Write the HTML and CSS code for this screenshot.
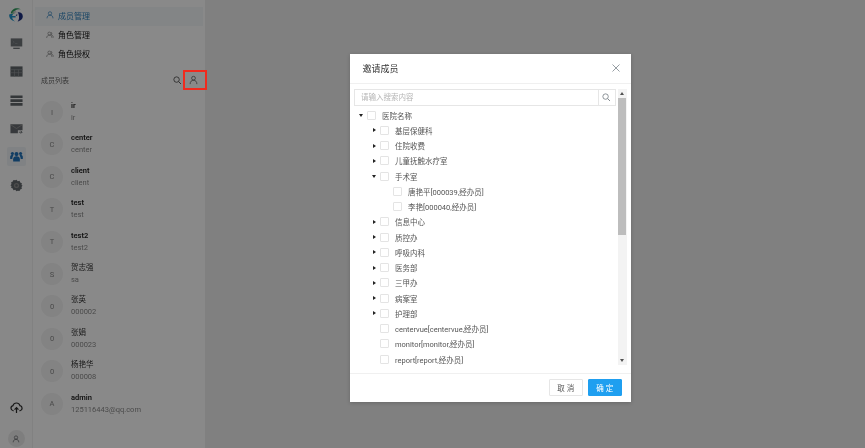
FILE: index.html
```html
<!DOCTYPE html>
<html lang="zh">
<head>
<meta charset="utf-8">
<title>成员管理</title>
<link rel="stylesheet" href="styles.css">
</head>
<body>
<div class="page">
  <div class="app">
    <nav class="rail">
      <div class="rail-top">
        <svg class="logo" viewBox="0 0 20 20"><path d="M3.500 8C4 3.500 8 1 12.500 1.500c1.500.2 2.700.8 3.500 1.700-2.500-.6-5-.3-6.500 1C8.300 5.300 8 6.500 8 8z" fill="#2f9a5c"/><path d="M12 6.500c3.500-.5 6.500 1.500 6.500 5 0 3.500-3 6-6.500 6.500 1.200-1.500 1.800-3 1.800-5 0-2.700-.5-4.800-1.800-6.500z" fill="#1c2f7e"/><path d="M11.500 8.500v2.500h-2z" fill="#1c2f7e"/><path d="M1.500 9.500c-.5 4 2.500 8 7.500 8.500-2-1-3.500-2.700-3.800-4.800h4.300v-2H5.200c.1-1 .5-1.800 1.300-2.500-2 0-3.800 0-5 .8z" fill="#1f93c9"/><path d="M5 6.500l4-2 2 2-3 1z" fill="#c9c9c9"/></svg>
        <svg class="ri" viewBox="0 0 14 14"><path d="M.8 1.500h12.400v8.700H.8z" fill="#6e7377"/><path d="M3 4l1.500 1.500L3 7M5.500 7H8" stroke="#8f9498" stroke-width=".7" fill="none"/><path d="M3.500 11.500h7v1.300h-7z" fill="#5f6468"/></svg>
        <svg class="ri" viewBox="0 0 14 14"><path d="M.5 1.500h13v11H.5z" fill="#5f6468"/><path d="M.5 5h13M.5 8.300h13M4.800 5v7.500M9.200 5v7.500" stroke="#8f9498" stroke-width=".7"/></svg>
        <svg class="ri" viewBox="0 0 14 14"><path d="M.5 1.500h13v2.900H.5zM.5 5.600h13v2.900H.5zM.5 9.700h13v2.900H.5z" fill="#5f6468"/></svg>
        <svg class="ri" viewBox="0 0 14 14"><path d="M.5 2.500h13v6.500H8.500v3H.5z" fill="#65696d"/><path d="M.8 3l6.200 4 6.200-4" stroke="#9a9a9a" stroke-width=".8" fill="none"/><path d="M9.500 11H13M11.500 9.500l1.500 1.500-1.500 1.500" stroke="#5f6468" stroke-width=".9" fill="none"/></svg>
        <div class="ri-active">
          <svg class="ri" viewBox="0 0 14 14"><g fill="#1f6fb5"><circle cx="7" cy="4.400" r="2.200"/><circle cx="2.600" cy="3.800" r="1.700"/><circle cx="11.400" cy="3.800" r="1.700"/><path d="M3.400 12.500V10c0-2.300 1.300-3.300 3.600-3.300s3.600 1 3.600 3.300v2.500z"/><path d="M.2 9.800V7.500c0-1.400.9-2 2.400-2 .5 0 .9.100 1.200.2C3 6.800 2.500 8.100 2.500 9.800zM13.800 9.800V7.500c0-1.400-.9-2-2.400-2-.5 0-.9.100-1.200.2.800 1.100 1.300 2.400 1.300 4.100z"/></g></svg>
        </div>
        <svg class="ri" viewBox="0 0 14 14"><path d="M7 .8l1.300 1.600 2-.4.700 1.800 1.800.8-.4 1.900L13.500 7l-1.100 1.500.4 1.900-1.800.8-.7 1.800-2-.4L7 13.200l-1.300-1.600-2 .4-.7-1.800-1.800-.8.4-1.900L.5 7l1.100-1.500-.4-1.900L3 2.800l.7-1.800 2 .4z" fill="#62676b"/><circle cx="7" cy="7" r="2.800" fill="#8c8c8c"/><circle cx="7" cy="7" r="1.300" fill="#62676b"/></svg>
      </div>
      <div class="rail-bottom">
        <svg class="cloud" viewBox="0 0 14 14"><path d="M4 10.500H3.500a2.800 2.800 0 0 1-.3-5.500 3.900 3.900 0 0 1 7.500 0 2.800 2.800 0 0 1 .1 5.500H10" fill="none" stroke="#2b2b2b" stroke-width="1.300"/><path d="M7 13V7.300M4.900 9.300 7 7.200l2.100 2.100" fill="none" stroke="#2b2b2b" stroke-width="1.300"/></svg>
        <div class="me">
          <svg class="me-icon" viewBox="0 0 12 12"><circle cx="6" cy="3.800" r="2.500" fill="none" stroke="#54585c"/><path d="M1.800 11c0-3 1.800-4.500 4.200-4.500S10.200 8 10.200 11" fill="none" stroke="#54585c"/></svg>
        </div>
      </div>
    </nav>

    <aside class="panel">
      <ul class="menu">
        <li class="menu-item is-active">
          <svg class="mi" viewBox="0 0 12 12"><circle cx="6" cy="3.600" r="2.500" fill="none" stroke="#2f7fb8"/><path d="M1.500 11c0-3.200 2-4.700 4.500-4.700s4.500 1.500 4.500 4.700" fill="none" stroke="#2f7fb8"/></svg>
          <span>成员管理</span>
        </li>
        <li class="menu-item">
          <svg class="mi" viewBox="0 0 12 12"><circle cx="5" cy="3.800" r="2.200" fill="none" stroke="#5e5e5e" stroke-width=".8"/><path d="M1 10.500c0-2.800 1.700-4.100 4-4.100s4 1.300 4 4.100M7.500 1.800a2.200 2.200 0 0 1 0 4c2 .4 3.500 1.600 3.500 4.200" fill="none" stroke="#5e5e5e" stroke-width=".8"/></svg>
          <span>角色管理</span>
        </li>
        <li class="menu-item">
          <svg class="mi" viewBox="0 0 12 12"><circle cx="5" cy="3.800" r="2.200" fill="none" stroke="#5e5e5e" stroke-width=".8"/><path d="M1 10.500c0-2.800 1.700-4.100 4-4.100s4 1.300 4 4.100M7.500 1.800a2.200 2.200 0 0 1 0 4c2 .4 3.500 1.600 3.500 4.200" fill="none" stroke="#5e5e5e" stroke-width=".8"/></svg>
          <span>角色授权</span>
        </li>
      </ul>
      <div class="list-head">
        <span class="list-title">成员列表</span>
        <svg class="list-search" viewBox="0 0 10 10"><circle cx="4.200" cy="4.200" r="3.200" fill="none" stroke="#4a4a4a" stroke-width="1"/><path d="M6.600 6.600 9.400 9.400" stroke="#4a4a4a" stroke-width="1.100"/></svg>
        <span class="invite">
          <svg class="invite-icon" viewBox="0 0 12 12"><circle cx="6" cy="3.600" r="2.500" fill="none" stroke="#555"/><path d="M1.500 11.500c0-3.500 2-5.200 4.500-5.200s4.500 1.700 4.500 5.200" fill="none" stroke="#555"/></svg>
        </span>
      </div>
      <ul class="members">
        <li class="member"><span class="avatar">I</span><div class="who"><b class="name">ir</b><span class="sub">ir</span></div></li>
        <li class="member"><span class="avatar">C</span><div class="who"><b class="name">center</b><span class="sub">center</span></div></li>
        <li class="member"><span class="avatar">C</span><div class="who"><b class="name">client</b><span class="sub">client</span></div></li>
        <li class="member"><span class="avatar">T</span><div class="who"><b class="name">test</b><span class="sub">test</span></div></li>
        <li class="member"><span class="avatar">T</span><div class="who"><b class="name">test2</b><span class="sub">test2</span></div></li>
        <li class="member"><span class="avatar">S</span><div class="who"><span class="name">贺志强</span><span class="sub">sa</span></div></li>
        <li class="member"><span class="avatar">0</span><div class="who"><span class="name">张英</span><span class="sub">000002</span></div></li>
        <li class="member"><span class="avatar">0</span><div class="who"><span class="name">张娟</span><span class="sub">000023</span></div></li>
        <li class="member"><span class="avatar">0</span><div class="who"><span class="name">杨艳华</span><span class="sub">000008</span></div></li>
        <li class="member"><span class="avatar">A</span><div class="who"><b class="name">admin</b><span class="sub">125116443@qq.com</span></div></li>
      </ul>
    </aside>
    <main class="main"></main>
  </div>

  <div class="mask"></div>
  <span class="highlight"></span>

  <section class="modal">
    <header class="modal-head">
      <h2 class="modal-title">邀请成员</h2>
      <svg class="close" viewBox="0 0 8 8"><path d="M.5.5l7 7M7.500.5l-7 7" stroke="#8a9299" stroke-width=".9"/></svg>
    </header>
    <div class="modal-body">
      <div class="content">
        <div class="search">
          <span class="placeholder">请输入搜索内容</span>
          <span class="search-btn"><svg class="search-icon" viewBox="0 0 10 10"><circle cx="4.200" cy="4.200" r="3.200" fill="none" stroke="#7a8288" stroke-width="1"/><path d="M6.600 6.600 9.400 9.400" stroke="#7a8288" stroke-width="1.100"/></svg></span>
        </div>
        <ul class="tree">
          <li class="row l0"><i class="open"></i><span class="cb"></span><span>医院名称</span></li>
          <li class="row l1"><i class="closed"></i><span class="cb"></span><span>基层保健科</span></li>
          <li class="row l1"><i class="closed"></i><span class="cb"></span><span>住院收费</span></li>
          <li class="row l1"><i class="closed"></i><span class="cb"></span><span>儿童抚触水疗室</span></li>
          <li class="row l1"><i class="open"></i><span class="cb"></span><span>手术室</span></li>
          <li class="row l2"><i></i><span class="cb"></span><span>唐艳平[000039,经办员]</span></li>
          <li class="row l2"><i></i><span class="cb"></span><span>李艳[000040,经办员]</span></li>
          <li class="row l1"><i class="closed"></i><span class="cb"></span><span>信息中心</span></li>
          <li class="row l1"><i class="closed"></i><span class="cb"></span><span>质控办</span></li>
          <li class="row l1"><i class="closed"></i><span class="cb"></span><span>呼吸内科</span></li>
          <li class="row l1"><i class="closed"></i><span class="cb"></span><span>医务部</span></li>
          <li class="row l1"><i class="closed"></i><span class="cb"></span><span>三甲办</span></li>
          <li class="row l1"><i class="closed"></i><span class="cb"></span><span>病案室</span></li>
          <li class="row l1"><i class="closed"></i><span class="cb"></span><span>护理部</span></li>
          <li class="row l1"><i></i><span class="cb"></span><span>centervue[centervue,经办员]</span></li>
          <li class="row l1"><i></i><span class="cb"></span><span>monitor[monitor,经办员]</span></li>
          <li class="row l1"><i></i><span class="cb"></span><span>report[report,经办员]</span></li>
        </ul>
      </div>
      <div class="scrollbar">
        <span class="sb-up"></span>
        <span class="sb-thumb"></span>
        <span class="sb-down"></span>
      </div>
    </div>
    <footer class="modal-foot">
      <button class="btn" type="button">取 消</button>
      <button class="btn btn-primary" type="button">确 定</button>
    </footer>
  </section>
</div>
</body>
</html>
```

FILE: styles.css
```css
* { box-sizing: border-box; }
html, body { margin: 0; padding: 0; height: 100%; }
body { overflow: hidden; font-family: Roboto, "Noto Sans CJK SC", sans-serif; background: #e8e8e8; }
ul { list-style: none; margin: 0; padding: 0; }

.page { position: relative; width: 865px; height: 448px; overflow: hidden; filter: blur(.55px); }
.app { display: flex; height: 100%; }

.rail { width: 33px; flex: none; display: flex; flex-direction: column; justify-content: space-between; align-items: center; background: #f7f7f7; border-right: 1px solid #ececec; padding: 7px 0 1px; }
.rail-top { display: flex; flex-direction: column; align-items: center; }
.logo { width: 16px; height: 16px; margin-bottom: 13.800px; }
.ri { display: block; width: 13px; height: 13px; margin-bottom: 15.400px; }
.ri-active { width: 19px; height: 19px; margin: -3px 0 12.400px; background: #e9edf0; border-radius: 2px; display: flex; align-items: center; justify-content: center; }
.ri-active .ri { margin: 0; }
.rail-bottom { display: flex; flex-direction: column; align-items: center; gap: 16px; }
.cloud { width: 13px; height: 13px; }
.me { width: 17px; height: 17px; border-radius: 50%; background: #e6e6e6; display: flex; align-items: center; justify-content: center; }
.me-icon { width: 8px; height: 8px; }

.panel { width: 172px; flex: none; background: #fafafa; padding-top: 6.500px; }
.menu { padding: 0 2px; }
.menu-item { display: flex; align-items: center; height: 19.300px; padding: 0 0 1.500px 11px; gap: 4px; font-size: 8px; color: #111; }
.menu-item.is-active { background: #eef2f5; color: #2f7fb8; }
.mi { width: 8px; height: 8px; flex: none; }

.list-head { display: flex; align-items: center; margin-top: 6px; height: 20px; padding-left: 8px; }
.list-title { font-size: 7px; color: #666; flex: 1; }
.list-search { width: 8.500px; height: 8.500px; }
.invite { width: 24px; height: 20px; display: flex; align-items: center; justify-content: center; }
.invite-icon { width: 9px; height: 10px; }

.members { margin-top: 5.500px; }
.member { display: flex; align-items: center; height: 32.400px; padding-left: 8px; }
.avatar { width: 22px; height: 22px; flex: none; border-radius: 50%; background: #eeeeee; color: #888; font-size: 7.500px; display: flex; align-items: center; justify-content: center; margin-right: 8px; }
.who { display: flex; flex-direction: column; line-height: 12px; }
.name { font-size: 7.500px; font-weight: 600; color: #222; }
span.name { font-weight: 400; color: #333; }
.sub { font-size: 7.500px; color: #888; }

.main { flex: 1; background: #eaeaea; }

.mask { position: absolute; inset: 0; background: rgba(0, 0, 0, .45); }
.highlight { position: absolute; left: 183px; top: 69.500px; width: 24px; height: 20px; border: 2px solid #f02a1e; }

.modal { position: absolute; left: 349.500px; top: 54px; width: 281px; height: 348px; background: #fff; display: flex; flex-direction: column; box-shadow: 0 1px 4px rgba(0, 0, 0, .2); }
.modal-head { flex: none; height: 29.500px; display: flex; align-items: center; justify-content: space-between; padding: 0 11px 0 13px; border-bottom: 1px solid #f0f0f0; }
.modal-title { margin: 0; font-size: 9px; font-weight: 400; color: #333; }
.close { width: 8px; height: 8px; }
.modal-body { flex: 1; min-height: 0; display: flex; padding: 5.500px 4px 0 4.500px; gap: 2px; }
.content { flex: 1; min-width: 0; }
.search { display: flex; height: 17px; border: 1px solid #e6e6e6; }
.placeholder { flex: 1; padding-left: 6px; font-size: 7.500px; line-height: 15px; color: #b5b5b5; }
.search-btn { width: 17px; border-left: 1px solid #e6e6e6; display: flex; align-items: center; justify-content: center; }
.search-icon { width: 8.500px; height: 8.500px; }

.tree { margin-top: 1.500px; font-size: 7.500px; color: #555; }
.row { display: flex; align-items: center; height: 15.250px; white-space: nowrap; }
.row.l0 { padding-left: 3.500px; }
.row.l1 { padding-left: 16.500px; }
.row.l2 { padding-left: 29.500px; }
.row i { width: 6px; height: 6px; flex: none; margin-right: 3px; position: relative; }
.row i.closed::before { content: ""; position: absolute; left: 2px; top: 1px; border-left: 3px solid #222; border-top: 2px solid transparent; border-bottom: 2px solid transparent; }
.row i.open::before { content: ""; position: absolute; left: 1px; top: 2px; border-top: 3px solid #222; border-left: 2px solid transparent; border-right: 2px solid transparent; }
.cb { width: 9px; height: 9px; flex: none; border: 1px solid #e4e4e4; border-radius: 1px; background: #fff; margin-right: 6.500px; }

.scrollbar { width: 9px; flex: none; height: 276px; background: #f3f3f3; display: flex; flex-direction: column; position: relative; }
.sb-up { height: 9px; position: relative; flex: none; }
.sb-up::before { content: ""; position: absolute; left: 2.500px; top: 3px; border-bottom: 3px solid #505050; border-left: 2px solid transparent; border-right: 2px solid transparent; }
.sb-thumb { height: 137px; margin: 0 .5px; background: #bdbdbd; flex: none; }
.sb-down { margin-top: auto; height: 9px; position: relative; flex: none; }
.sb-down::before { content: ""; position: absolute; left: 2.500px; top: 3px; border-top: 3px solid #505050; border-left: 2px solid transparent; border-right: 2px solid transparent; }

.modal-foot { flex: none; height: 29px; border-top: 1px solid #f0f0f0; display: flex; justify-content: flex-end; align-items: center; gap: 4.500px; padding: 0 8.500px 1px 0; }
.btn { width: 34.500px; height: 17.500px; padding: 0; border: 1px solid #e6e6e6; background: #fff; color: #555; font: 7.500px Roboto, "Noto Sans CJK SC", sans-serif; border-radius: 1px; }
.btn-primary { background: #1f9ff0; border-color: #1f9ff0; color: #fff; }
```
